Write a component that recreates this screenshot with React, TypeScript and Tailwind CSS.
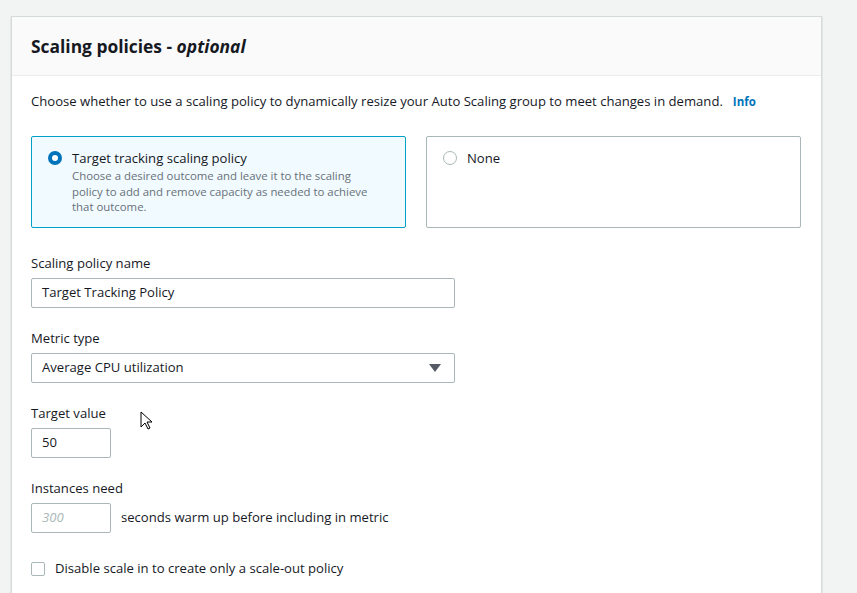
const font = { fontFamily: '"Open Sans", "Liberation Sans", sans-serif' };

function Label({ children }: { children: React.ReactNode }) {
  return <div className="text-[13.1px] leading-[20px] text-[#16191f] mb-[5px]">{children}</div>;
}

export default function App() {
  return (
    <div className="w-[857px] h-[593px] overflow-hidden bg-[#f2f3f3] pt-[16px] pl-[11px] relative" style={font}>
      <div className="w-[811px] h-[600px] bg-white border-l border-r border-t border-[#d5dbdb] shadow-[0_1px_1px_0_rgba(0,28,36,0.3)]">
        <div className="h-[59px] bg-[#fafafa] border-b border-[#eaeded] flex items-center px-[19px]">
          <h2 className="text-[17.4px] font-bold text-[#16191f]">
            Scaling policies - <i>optional</i>
          </h2>
        </div>

        <div className="px-[19px] pt-[15px]">
          <p className="text-[13.1px] leading-[20px] text-[#16191f] whitespace-nowrap">
            Choose whether to use a scaling policy to dynamically resize your Auto Scaling group to meet changes in demand.
            <span className="ml-[10px] text-[11.5px] font-bold text-[#0073bb]">Info</span>
          </p>

          <div className="flex gap-[20px] mt-[24px]">
            <div className="w-[375px] h-[92px] border border-[#00a1c9] bg-[#f1faff] rounded-[2px] flex px-[16px] pt-[11px]">
              <span className="w-[14px] h-[14px] mt-[3px] rounded-full border-[4px] border-[#0073bb] bg-white shrink-0" />
              <div className="ml-[10px]">
                <div className="text-[13.1px] leading-[20px] text-[#16191f]">Target tracking scaling policy</div>
                <div className="text-[11.4px] leading-[15.5px] text-[#687078] w-[306px]">
                  Choose a desired outcome and leave it to the scaling policy to add and remove capacity as needed to achieve that outcome.
                </div>
              </div>
            </div>
            <div className="w-[375px] h-[92px] border border-[#aab7b8] bg-white rounded-[2px] flex px-[16px] pt-[11px]">
              <span className="w-[14px] h-[14px] mt-[3px] rounded-full border border-[#aab7b8] bg-white shrink-0" />
              <div className="ml-[10px] text-[13.1px] leading-[20px] text-[#16191f]">None</div>
            </div>
          </div>

          <div className="mt-[25px]">
            <Label>Scaling policy name</Label>
            <div className="w-[424px] h-[30px] border border-[#aab7b8] rounded-[2px] flex items-center px-[10px] text-[13.1px] text-[#16191f]">
              Target Tracking Policy
            </div>
          </div>

          <div className="mt-[20px]">
            <Label>Metric type</Label>
            <div className="w-[424px] h-[30px] border border-[#aab7b8] rounded-[2px] flex items-center justify-between px-[10px] text-[13.1px] text-[#16191f]">
              <span>Average CPU utilization</span>
              <svg width="12" height="8" viewBox="0 0 12 8" className="mr-[3px]">
                <path d="M0 0h12L6 8z" fill="#545b64" />
              </svg>
            </div>
          </div>

          <div className="mt-[20px]">
            <Label>Target value</Label>
            <div className="w-[80px] h-[30px] border border-[#aab7b8] rounded-[2px] flex items-center px-[10px] text-[13.1px] text-[#16191f]">
              50
            </div>
          </div>

          <div className="mt-[20px]">
            <Label>Instances need</Label>
            <div className="flex items-center">
              <div className="w-[80px] h-[30px] border border-[#aab7b8] rounded-[2px] flex items-center px-[10px] text-[13.1px] italic text-[#aab7b8]">
                300
              </div>
              <span className="ml-[10px] text-[13.1px] text-[#16191f]">seconds warm up before including in metric</span>
            </div>
          </div>

          <div className="mt-[26px] flex items-center">
            <span className="w-[14px] h-[14px] border border-[#aab7b8] rounded-[2px] bg-white" />
            <span className="ml-[10px] text-[13.1px] text-[#16191f]">Disable scale in to create only a scale-out policy</span>
          </div>
        </div>
      </div>

      <svg width="14" height="20" viewBox="0 0 14 20" className="absolute left-[140px] top-[411px]">
        <path d="M1 1v15l4-4 3 6 2-1-3-6h5z" fill="white" stroke="black" strokeWidth="1" strokeLinejoin="round" />
      </svg>
    </div>
  );
}
